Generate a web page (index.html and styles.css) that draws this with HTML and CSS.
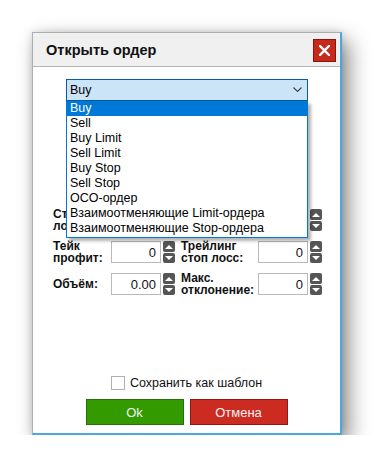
FILE: index.html
```html
<!DOCTYPE html>
<html lang="ru">
<head>
    <meta charset="UTF-8">
    <meta name="viewport" content="width=device-width, initial-scale=1.0">
    <title>Открыть ордер</title>
    <link rel="stylesheet" href="styles.css">
</head>
<body>

<div class="dialog">
    <div class="dialog-title">
        <span class="title-text">Открыть ордер</span>
        <button class="close-btn" title="Закрыть">
            <svg width="11" height="11" viewBox="0 0 11 11"><path d="M1 1 L10 10 M10 1 L1 10" stroke="#fff" stroke-width="2.4" stroke-linecap="square"/></svg>
        </button>
    </div>

    <div class="dialog-body">
        <div class="select-wrap">
            <div class="select-box">
                <span>Buy</span>
                <svg class="chevron" width="9" height="5" viewBox="0 0 9 5"><path d="M0.5 0.5 L4.5 4.5 L8.5 0.5" fill="none" stroke="#444" stroke-width="1.1"/></svg>
            </div>
            <!-- открытый список типов ордера -->
            <ul class="dropdown">
                <li class="selected">Buy</li>
                <li>Sell</li>
                <li>Buy Limit</li>
                <li>Sell Limit</li>
                <li>Buy Stop</li>
                <li>Sell Stop</li>
                <li>OCO-ордер</li>
                <li>Взаимоотменяющие Limit-ордера</li>
                <li>Взаимоотменяющие Stop-ордера</li>
            </ul>
        </div>

        <div class="form-grid">
            <div class="label">Стоп<br>лосс:</div>
            <div class="field"><input class="num" value=""><div class="spin"><span class="up"></span><span class="down"></span></div></div>
            <div class="label"></div>
            <div class="field"><input class="num" value=""><div class="spin"><span class="up"></span><span class="down"></span></div></div>

            <div class="label">Тейк<br>профит:</div>
            <div class="field"><input class="num" value="0"><div class="spin"><span class="up"></span><span class="down"></span></div></div>
            <div class="label">Трейлинг<br>стоп лосс:</div>
            <div class="field"><input class="num" value="0"><div class="spin"><span class="up"></span><span class="down"></span></div></div>

            <div class="label">Объём:</div>
            <div class="field"><input class="num" value="0.00"><div class="spin"><span class="up"></span><span class="down"></span></div></div>
            <div class="label">Макс.<br>отклонение:</div>
            <div class="field"><input class="num" value="0"><div class="spin"><span class="up"></span><span class="down"></span></div></div>
        </div>

        <label class="save-row"><span class="checkbox"></span>Сохранить как шаблон</label>

        <div class="actions">
            <button class="btn btn-ok">Ok</button>
            <button class="btn btn-cancel">Отмена</button>
        </div>
    </div>
</div>

</body>
</html>
```

FILE: styles.css
```css
body {
    margin: 0;
    background: #fff;
    font-family: 'Liberation Sans', Arial, sans-serif;
    color: #000;
}
.dialog {
    margin: 32px 0 0 32px;
    width: 307px;
    background: #fff;
    border-top: 1px solid #aeaeae;
    border-left: 1px solid #aeaeae;
    border-right: 2px solid #4aa8e0;
    border-bottom: 2px solid #4aa8e0;
    box-shadow: 7px 9px 20px rgba(0,0,0,0.45), 0 0 8px rgba(0,0,0,0.15);
}
.dialog-title {
    height: 33px;
    background: #f0f0f0;
    border-bottom: 1px solid #b4b4b4;
    display: flex;
    align-items: center;
    justify-content: space-between;
    padding: 0 4px 0 13px;
}
.title-text {
    font-size: 14.5px;
    font-weight: bold;
    color: #111;
}
.close-btn {
    width: 23px;
    height: 23px;
    padding: 0;
    margin-top: 1px;
    border: 1px solid #8e1409;
    background: #c62a1d;
    display: flex;
    align-items: center;
    justify-content: center;
}
.dialog-body {
    padding: 12px 0 8px 0;
}
.select-wrap {
    position: relative;
    margin-left: 33px;
    width: 242px;
}
.select-box {
    height: 20px;
    border: 1px solid #0a5a9c;
    background: #cce4f7;
    display: flex;
    align-items: center;
    justify-content: space-between;
    padding: 0 5px 0 3px;
    font-size: 12.5px;
}
.chevron {
    margin-bottom: 1px;
}
.dropdown {
    position: absolute;
    top: 22px;
    left: 0;
    width: 240px;
    margin: 0;
    padding: 0 0 1px 0;
    list-style: none;
    background: #fff;
    border: 1px solid #0078d7;
    border-top: none;
    box-shadow: 3px 3px 3px rgba(0,0,0,0.3);
    z-index: 2;
    font-size: 12.5px;
}
.dropdown li {
    height: 15px;
    line-height: 15px;
    padding-left: 3px;
    white-space: nowrap;
}
.dropdown li.selected {
    background: #0078d7;
    color: #fff;
}
.form-grid {
    margin: 108px 0 0 20px;
    display: grid;
    grid-template-columns: 58px 70px 77px 65px;
    grid-auto-rows: 22px;
    row-gap: 10px;
}
.label {
    align-self: center;
    font-size: 12px;
    font-weight: bold;
    line-height: 12px;
    color: #111;
}
.field {
    display: flex;
    gap: 2px;
}
.num {
    width: 50px;
    height: 22px;
    box-sizing: border-box;
    border: 1px solid #b9b9b9;
    padding: 0 4px 0 0;
    text-align: right;
    font-family: 'Liberation Sans', Arial, sans-serif;
    font-size: 13px;
    color: #111;
}
.spin {
    width: 12px;
    display: flex;
    flex-direction: column;
    gap: 1px;
}
.spin span {
    background: #555;
    border-radius: 2px;
    display: flex;
    align-items: center;
    justify-content: center;
}
.spin .up { height: 11px; }
.spin .down { height: 10px; }
.spin .up::after {
    content: '';
    border-left: 4px solid transparent;
    border-right: 4px solid transparent;
    border-bottom: 4px solid #fff;
}
.spin .down::after {
    content: '';
    border-left: 4px solid transparent;
    border-right: 4px solid transparent;
    border-top: 4px solid #fff;
}
.save-row {
    margin-top: 80px;
    height: 15px;
    display: flex;
    align-items: center;
    justify-content: center;
    gap: 5px;
    font-size: 12.5px;
    color: #111;
}
.checkbox {
    width: 12px;
    height: 12px;
    border: 1px solid #b0b0b0;
    background: #fff;
}
.actions {
    margin-top: 9px;
    display: flex;
    justify-content: center;
    gap: 6px;
}
.btn {
    width: 98px;
    height: 26px;
    font-family: 'Liberation Sans', Arial, sans-serif;
    font-size: 13px;
    color: #f2f2f2;
    cursor: pointer;
}
.btn-ok {
    background: #339a00;
    border: 1px solid #2a6e0c;
}
.btn-cancel {
    background: #cc2b21;
    border: 1px solid #97150f;
}
```
